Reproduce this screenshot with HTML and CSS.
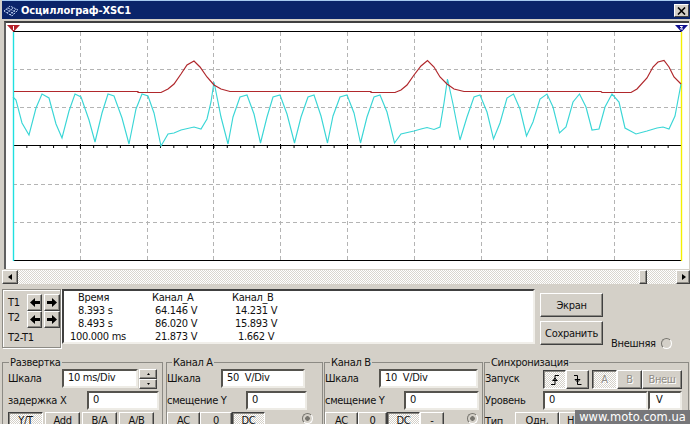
FILE: index.html
```html
<!DOCTYPE html>
<html lang="ru">
<head>
<meta charset="utf-8">
<title>Осциллограф-XSC1</title>
<link rel="stylesheet" href="styles.css">
</head>
<body>
<header class="titlebar">
  <svg class="logo" width="14" height="12" viewBox="0 0 14 12"><path d="M0 6L6 1l8 4-6 6zM2 4l8 5M4 3l8 4M3 8l7-6M6 10l6-6" fill="none" stroke="#b9cbed" stroke-dasharray="2 1"/></svg>
  <h1>Осциллограф-XSC1</h1>
  <button class="close"><svg width="9" height="8" viewBox="0 0 9 8"><path d="M1 .5l7 7M8 .5l-7 7" stroke="#000" stroke-width="1.6"/></svg></button>
</header>
<main class="scope">
  <svg width="682" height="246" viewBox="6 23 682 246">
    <g stroke="#b4b4b4" stroke-dasharray="4 3" fill="none">
      <path d="M80.5 32V260M147.5 32V260M213.5 32V260M280.5 32V260M347.5 32V260M414.5 32V260M481.5 32V260M547.5 32V260M614.5 32V260"/>
      <path d="M13 69.5H681M13 107.5H681M13 184.5H681M13 222.5H681"/>
    </g>
    <path d="M13 31.5H681M13 145.5H681M13 260.5H681" stroke="#000"/>
    <path d="M13 147H681" stroke="#000" stroke-width="2" stroke-dasharray="1 12.36"/>
    <path d="M80.5 144v5M147.5 144v5M213.5 144v5M280.5 144v5M347.5 144v5M414.5 144v5M481.5 144v5M547.5 144v5M614.5 144v5" stroke="#000"/>
    <path d="M13.5 32V261" stroke="#1fe0e0" stroke-width="1.4"/>
    <path d="M681.5 32V261" stroke="#f4f000" stroke-width="1.4"/>
    <polyline fill="none" stroke="#3ad6d6" stroke-width="1.15" points="13,97 16,100 22,123 29,135 36,108 42,94 49,98 56,124 62,138 69,111 75,94 81,97 89,120 95,142 102,113 108,94 114,96 122,118 129,144 136,109 142,94 148,96 154,113 161,146 168,134 174,133 181,130 194,127 201,129 207,119 211,102 214,82 221,117 228,144 233,117 240,97 247,95 254,114 260.5,143 267,117 273,97 280,95 287,114 294.5,143 301,117 308,97 314,95 321,116 327.5,143 333,116 340,97 347,95 354,113 360.5,143 367,117 374,97 380,95 387,112 394.5,143 401,134 414,131 421,129 427,127.5 434,129.5 440,127 444,103 447.5,79 453,104 460,140 467,117 474,97 480,95 487,112 493.5,139 500,123 507,98 513.5,94 520,109 526.5,136 533,122 540,99 547,94 553,107 559.5,133 566,127 573,102 579.5,94 586,107 592,130 599,129 605,107 612,94 619,102 625,128 636,134 647,131 657,128 663,127 669,129 675,116 681,84"/>
    <polyline fill="none" stroke="#b0282c" stroke-width="1.2" points="14,91.5 138,91.5 138,92.5 161,92.5 168,89 174,84 181,74 187,65 194,61 200,67 207,77 214,85 221,89 230,91.5 371,91.5 371,92.5 395,92.5 401,90 407,85 414,75 421,66 427.5,60.5 434,67 440,77 447,84 454,89 464,91.5 601,91.5 602,92.5 631,92.5 637,89 647,78 653,67 658,62 664,60.5 669,67 674,77 681,84"/>
    <path d="M7 25H20L13.5 32z" fill="#b5202a"/><path d="M13.5 26v4" stroke="#fff"/>
    <path d="M675 25H688L681.5 32z" fill="#101090"/><path d="M680 26.5h2.5l-2 2.5h2.5" stroke="#fff" fill="none"/>
  </svg>
</main>
<div class="scroll">
  <button class="raised sleft"><svg width="5" height="7"><path d="M4 0v6L0 3z"/></svg></button>
  <span class="raised thumb"></span>
  <button class="raised sright"><svg width="5" height="7"><path d="M1 0v6l4-3z"/></svg></button>
</div>
<section class="middle">
  <div class="cursors">
    <div class="names"><span>T1</span><span>T2</span><span class="diff">T2-T1</span></div>
    <div class="arrows">
      <button class="raised"><svg width="10" height="9"><path d="M0 4.5L5 0v3h5v3H5v3z"/></svg></button>
      <button class="raised"><svg width="10" height="9"><path d="M10 4.5L5 0v3H0v3h5v3z"/></svg></button>
      <button class="raised"><svg width="10" height="9"><path d="M0 4.5L5 0v3h5v3H5v3z"/></svg></button>
      <button class="raised"><svg width="10" height="9"><path d="M10 4.5L5 0v3H0v3h5v3z"/></svg></button>
    </div>
  </div>
  <div class="readout">
    <div class="time"><span>Время</span><span>8.393 s</span><span>8.493 s</span><span class="wide">100.000 ms</span></div>
    <div class="cha"><span>Канал_A</span><span>64.146 V</span><span>86.020 V</span><span>21.873 V</span></div>
    <div class="chb"><span>Канал_B</span><span>14.231 V</span><span>15.893 V</span><span>1.662 V</span></div>
  </div>
  <div class="actions"><button class="raised">Экран</button><button class="raised">Сохранить</button></div>
  <div class="external"><span>Внешняя</span><i class="radio"></i></div>
</section>
<section class="groups">
  <fieldset class="sweep">
    <legend>Развертка</legend>
    <div class="row"><label>Шкала</label><span class="field">10 ms/Div</span>
      <span class="spin"><button class="raised"><svg width="3" height="2"><path d="M0 2h3L1.5 0z"/></svg></button><button class="raised"><svg width="3" height="2"><path d="M0 0h3L1.5 2z"/></svg></button></span></div>
    <div class="row"><label class="long">задержка X</label><span class="field">0</span></div>
    <div class="keys"><button class="pressed">Y/T</button><button class="raised">Add</button><button class="raised">B/A</button><button class="raised">A/B</button></div>
  </fieldset>
  <fieldset class="channel a">
    <legend>Канал A</legend>
    <div class="row"><label>Шкала</label><span class="field">50&nbsp; V/Div</span></div>
    <div class="row"><label class="long">смещение Y</label><span class="field">0</span></div>
    <div class="keys"><button class="raised">AC</button><button class="raised">0</button><button class="pressed">DC</button><i class="radio on"></i></div>
  </fieldset>
  <fieldset class="channel b">
    <legend>Канал B</legend>
    <div class="row"><label>Шкала</label><span class="field">10&nbsp; V/Div</span></div>
    <div class="row"><label class="long">смещение Y</label><span class="field">0</span></div>
    <div class="keys"><button class="raised">AC</button><button class="raised">0</button><button class="pressed">DC</button><button class="raised">-</button><i class="radio on"></i></div>
  </fieldset>
  <fieldset class="sync">
    <legend>Синхронизация</legend>
    <div class="row trig"><label>Запуск</label>
      <button class="pressed"><svg width="10" height="10"><path d="M1 9.5h4v-9h4M2.500 5.500h5M5 3l2 2.500M5 3L3 5.500" fill="none" stroke="#000"/></svg></button>
      <button class="raised"><svg width="10" height="10"><path d="M1 .5h3.500v9h4M2 4.500h5M4.500 7L2 4.500M4.500 7L7 4.500" fill="none" stroke="#000"/></svg></button>
      <button class="pressed off">A</button><button class="raised off">B</button><button class="raised off">Внеш</button></div>
    <div class="row level"><label>Уровень</label><span class="field">0</span><span class="field unit">V</span></div>
    <div class="keys"><label>Тип</label><button class="raised">Одн.</button><button class="raised norm">Н</button></div>
  </fieldset>
</section>
<div class="watermark">www.moto.com.ua</div>
</body>
</html>
```

FILE: styles.css
```css
* { box-sizing: border-box; }
body {
  margin: 0; width: 690px; height: 424px; overflow: hidden; position: relative;
  background: #d4d0c8; color: #111;
  font: 11px/13px "DejaVu Sans Condensed", "DejaVu Sans", sans-serif;
  font-stretch: condensed; letter-spacing: -0.3px;
}
button { font: inherit; letter-spacing: inherit; color: inherit; margin: 0; padding: 0; border: 0; display: flex; align-items: center; justify-content: center; background: #d4d0c8; flex: none; }
svg { display: block; flex: none; }
span, label { white-space: nowrap; }
.raised { background: #d4d0c8; border: 1px solid; border-color: #fff #404040 #404040 #fff; box-shadow: inset -1px -1px #8c8a84; }
.pressed { background: repeating-conic-gradient(#fff 0 25%, #d4d0c8 0 50%) 0 0 / 2px 2px; border: 1px solid; border-color: #404040 #fff #fff #404040; box-shadow: inset 1px 1px #8c8a84; }
.off { color: #908d86; text-shadow: 1px 1px #fff; }

.titlebar { display: flex; align-items: center; height: 19px; margin-left: 2px; padding: 1px 1px 0 2px; background: #0a246a; border-top: 1px solid #a6caf0; }
.titlebar h1 { margin: 0 auto 0 3px; color: #fff; font: bold 11px/14px "DejaVu Sans Condensed", "DejaVu Sans", sans-serif; letter-spacing: -0.1px; }
.close { width: 15px; height: 13px; border: 1px solid; border-color: #fff #404040 #404040 #fff; }

.scope { margin: 2px 1px 0 4px; height: 248px; background: #fff; border: solid #404040; border-width: 2px 0 0 2px; border-left-color: #606060; }

.scroll { display: flex; height: 14px; margin: 1px 0 0 2px; background: repeating-conic-gradient(#fff 0 25%, #d9d6cf 0 50%) 0 0 / 2px 2px; }
.sleft { width: 16px; }
.sright { width: 14px; }
.thumb { width: 8px; margin: 0 29px 0 auto; }

.middle { display: flex; height: 59px; margin: 5px 0 0 2px; }
.cursors { display: flex; width: 59px; height: 59px; padding: 4px 0 0 5px; border: 1px solid #8c8a84; box-shadow: inset 1px 1px #fff, 1px 1px #fff; }
.names { display: flex; flex-direction: column; width: 19px; padding-top: 2px; }
.names span { height: 15px; }
.names .diff { margin-top: 5px; }
.arrows { display: grid; grid-template-columns: 15px 16px; grid-auto-rows: 17px; column-gap: 2px; height: 34px; }
.readout { display: flex; width: 473px; height: 55px; margin-left: 1px; background: #fff; border: 2px solid; border-color: #404040 #f1efea #f1efea #404040; }
.readout div { display: flex; flex-direction: column; }
.readout span { height: 13px; }
.time { width: 88px; padding-left: 14px; }
.time .wide { margin-left: -8px; }
.cha { width: 80px; }
.cha span:not(:first-child) { padding-left: 3px; }
.chb span:not(:first-child) { padding-left: 3px; }
.chb span:last-child { padding-left: 6px; }
.actions { display: flex; flex-direction: column; gap: 4px; width: 63px; margin: 4px 0 0 5px; }
.actions button { height: 24px; }
.external { display: flex; align-items: center; gap: 5px; height: 13px; margin: 48px 0 0 8px; }
.external span { width: 45px; }

.radio { width: 11px; height: 11px; border-radius: 50%; border: 1px solid; border-color: #77756f #fff #fff #77756f; flex: none; }
.radio.on { background: radial-gradient(circle, #77756f 0 2px, transparent 2.6px); }

.groups { display: flex; height: 80px; margin: 8px 0 0 2px; }
fieldset { flex: none; height: 80px; margin: 0; padding: 0 0 0 5px; min-width: 0; border: 1px solid #8c8a84; }
legend { height: 13px; margin-left: 1px; padding: 0 1px; }
.sweep { width: 161px; }
.channel.a { width: 157px; margin-left: 3px; padding-left: 0; }
.channel.b { width: 159px; margin-left: 1px; padding-left: 0; }
.sync { width: 205px; margin-left: 1px; padding-left: 0; }
.channel legend { margin-left: 5px; }
.sync legend { margin-left: 5px; }
.row { display: flex; height: 21px; align-items: flex-start; }
.row label { width: 54px; padding-top: 3px; }
.row .long { width: 79px; }
.field { height: 19px; padding: 0 0 0 4px; line-height: 14px; background: #fff; border: 2px solid; border-color: #55534e #eeece6 #eeece6 #55534e; }
.row:nth-of-type(2) { margin-top: 1px; height: 21px; }
.sweep .field { width: 76px; }
.sweep .long + .field { width: 72px; }
.spin { display: grid; grid-template-rows: 10px 10px; width: 18px; margin-left: 1px; }
.keys { display: flex; height: 18px; }
.keys button { height: 17px; }
.sweep .keys { gap: 2px; }
.sweep .keys button { width: 35px; }
.channel .field { width: 84px; }
.channel .long + .field { width: 61px; }
.b .field { width: 99px; }
.b .long + .field { width: 75px; }
.channel .keys button { width: 33px; }
.channel .keys button:nth-child(2) { width: 32px; }
.channel .radio { margin: 1px 0 0 37px; }
.b .keys button:nth-child(2) { width: 29px; }
.b .keys button:nth-child(4) { width: 24px; }
.b .radio { margin-left: 23px; }
.trig button { width: 23px; height: 19px; margin-top: 1px; }
.sync .row label { width: 58px; }
.trig button:nth-of-type(3) { width: 25px; margin-left: 3px; }
.trig button:nth-of-type(4) { width: 25px; }
.trig button:nth-of-type(5) { width: 40px; }
.level .field { width: 105px; }
.level .unit { width: 34px; padding-left: 6px; }
.sync .keys label { width: 30px; padding-top: 3px; }
.sync .keys button { width: 44px; }
.sync .keys .norm { justify-content: flex-start; padding-left: 7px; }
.watermark { position: absolute; right: 0; bottom: 0; width: 115px; height: 14px; background: #77777a; color: #fff; font: 11.5px/14px "DejaVu Sans", sans-serif; letter-spacing: 0; text-align: center; white-space: nowrap; }
```
